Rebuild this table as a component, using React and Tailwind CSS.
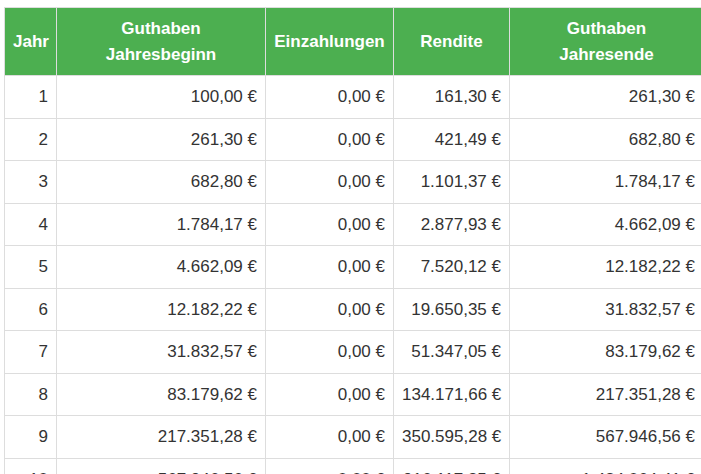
import React from "react";

const rows = [
  ["1", "100,00 €", "0,00 €", "161,30 €", "261,30 €"],
  ["2", "261,30 €", "0,00 €", "421,49 €", "682,80 €"],
  ["3", "682,80 €", "0,00 €", "1.101,37 €", "1.784,17 €"],
  ["4", "1.784,17 €", "0,00 €", "2.877,93 €", "4.662,09 €"],
  ["5", "4.662,09 €", "0,00 €", "7.520,12 €", "12.182,22 €"],
  ["6", "12.182,22 €", "0,00 €", "19.650,35 €", "31.832,57 €"],
  ["7", "31.832,57 €", "0,00 €", "51.347,05 €", "83.179,62 €"],
  ["8", "83.179,62 €", "0,00 €", "134.171,66 €", "217.351,28 €"],
  ["9", "217.351,28 €", "0,00 €", "350.595,28 €", "567.946,56 €"],
  ["10", "567.946,56 €", "0,00 €", "916.117,85 €", "1.484.064,41 €"],
];

export default function App() {
  return (
    <div className="w-[701px] h-[474px] overflow-hidden bg-white pt-[7px] pl-[4px] font-['Liberation_Sans',Arial,sans-serif]">
      <table className="table-fixed border-collapse w-[699px] text-[17px] leading-[25.5px] text-[#333]">
        <colgroup>
          <col className="w-[52px]" />
          <col className="w-[209px]" />
          <col className="w-[128px]" />
          <col className="w-[116px]" />
          <col className="w-[194px]" />
        </colgroup>
        <thead>
          <tr className="bg-[#4caf50] text-white font-bold">
            <th className="border border-[#ddd] px-2 py-2 text-center">Jahr</th>
            <th className="border border-[#ddd] px-2 py-2 text-center">Guthaben<br />Jahresbeginn</th>
            <th className="border border-[#ddd] px-2 py-2 text-center">Einzahlungen</th>
            <th className="border border-[#ddd] px-2 py-2 text-center">Rendite</th>
            <th className="border border-[#ddd] px-2 py-2 text-center">Guthaben<br />Jahresende</th>
          </tr>
        </thead>
        <tbody>
          {rows.map((r) => (
            <tr key={r[0]}>
              {r.map((c, i) => (
                <td key={i} className="border border-[#ddd] px-2 py-2 text-right whitespace-nowrap">{c}</td>
              ))}
            </tr>
          ))}
        </tbody>
      </table>
    </div>
  );
}
